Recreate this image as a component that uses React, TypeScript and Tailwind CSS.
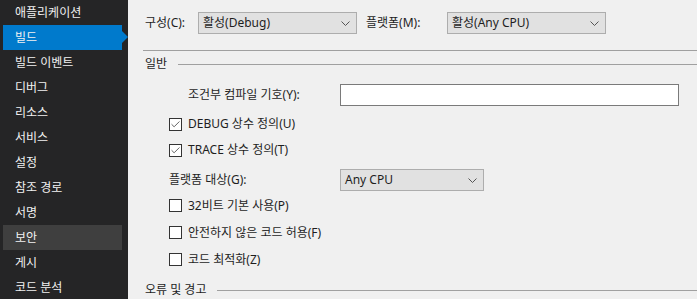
import { Check } from "lucide-react";

const font = "font-['Segoe_UI','Noto_Sans','Noto_Sans_CJK_KR',sans-serif]";

const navItems = [
  "애플리케이션",
  "빌드",
  "빌드 이벤트",
  "디버그",
  "리소스",
  "서비스",
  "설정",
  "참조 경로",
  "서명",
  "보안",
  "게시",
  "코드 분석",
];

const Chevron = () => (
  <svg width="9" height="5" viewBox="0 0 9 5" className="text-[#555]">
    <path d="M0.5 0.5 L4.5 4.5 L8.5 0.5" fill="none" stroke="currentColor" strokeWidth="1" />
  </svg>
);

const Combo = ({ value, width }: { value: string; width: string }) => (
  <div
    className={`flex h-[22px] ${width} items-center justify-between border border-[#adadad] bg-[#e1e1e1] pl-[4px] pr-[6px]`}
  >
    <span>{value}</span>
    <Chevron />
  </div>
);

const Box = ({ checked }: { checked?: boolean }) => (
  <div className="mr-[6px] flex h-[13px] w-[13px] items-center justify-center border border-[#333] bg-white">
    {checked && <Check className="h-[11px] w-[11px] text-[#555]" strokeWidth={2} />}
  </div>
);

const CheckRow = ({ label, checked, h = "h-[27px]" }: { label: string; checked?: boolean; h?: string }) => (
  <div className={`flex ${h} items-center pl-[41px]`}>
    <Box checked={checked} />
    <span>{label}</span>
  </div>
);

const App = () => {
  return (
    <div className={`flex h-[299px] w-[697px] overflow-hidden text-[12px] ${font}`}>
      <nav className="w-[128px] shrink-0 bg-[#252526] text-[#f1f1f1]">
        {navItems.map((item, i) => (
          <div key={item} className="relative h-[25px]">
            <div
              className={`ml-[3px] flex h-full w-[119px] items-center pl-[12px] ${
                i === 1 ? "bg-[#007acc]" : i === 9 ? "bg-[#3f3f3f]" : ""
              }`}
            >
              {item}
            </div>
            {i === 1 && (
              <div className="absolute left-[122px] top-[6px] h-0 w-0 border-y-[6px] border-l-[6px] border-y-transparent border-l-[#007acc]" />
            )}
          </div>
        ))}
      </nav>

      <main className="flex-1 bg-[#f0f0f0] text-[#1e1e1e]">
        <div className="flex items-center pl-[17px] pt-[12px]">
          <span className="w-[53px]">구성(C):</span>
          <Combo value="활성(Debug)" width="w-[159px]" />
          <span className="ml-[9px] w-[81px]">플랫폼(M):</span>
          <Combo value="활성(Any CPU)" width="w-[159px]" />
        </div>

        <div className="ml-[15px] mt-[16px] h-px bg-[#a0a0a0]" />

        <div className="flex h-[26px] items-center pl-[17px]">
          <span>일반</span>
          <div className="ml-[11px] h-px flex-1 bg-[#a0a0a0]" />
        </div>

        <div className="mt-[7px] flex items-center pl-[60px]">
          <span className="w-[152px]">조건부 컴파일 기호(Y):</span>
          <div className="h-[22px] w-[339px] border border-[#7a7a7a] bg-white" />
        </div>

        <div className="mt-[5px]">
          <CheckRow label="DEBUG 상수 정의(U)" checked h="h-[26px]" />
          <CheckRow label="TRACE 상수 정의(T)" checked h="h-[26px]" />
        </div>

        <div className="mt-[6px] flex items-center pl-[41px]">
          <span className="w-[171px]">플랫폼 대상(G):</span>
          <Combo value="Any CPU" width="w-[144px]" />
        </div>

        <div className="mt-[1px]">
          <CheckRow label="32비트 기본 사용(P)" />
          <CheckRow label="안전하지 않은 코드 허용(F)" />
          <CheckRow label="코드 최적화(Z)" />
        </div>

        <div className="mt-[4px] flex h-[26px] items-center pl-[17px]">
          <span>오류 및 경고</span>
          <div className="ml-[11px] h-px flex-1 bg-[#a0a0a0]" />
        </div>
      </main>
    </div>
  );
};

export default App;
